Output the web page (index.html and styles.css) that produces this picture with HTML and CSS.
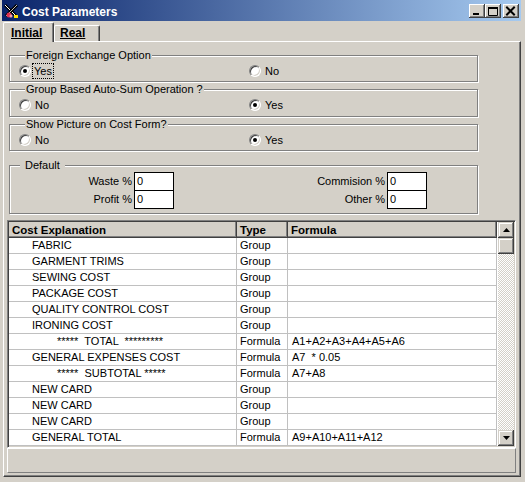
FILE: index.html
```html
<!DOCTYPE html>
<html lang="en">
<head>
    <meta charset="UTF-8">
    <title>Cost Parameters</title>
    <link rel="stylesheet" href="styles.css">
</head>
<body>

<div class="window">
    <!-- Caption bar -->
    <div class="titlebar">
        <svg class="app-icon" width="16" height="16" viewBox="0 0 16 16">
            <path d="M2 2 L13 13" stroke="#000" stroke-width="3"/>
            <path d="M2 2 L13 13" stroke="#fff" stroke-width="1"/>
            <path d="M14 2 L3 13" stroke="#000" stroke-width="3"/>
            <path d="M14 2 L3 13" stroke="#c0c0c0" stroke-width="1"/>
            <circle cx="6" cy="12" r="2.5" fill="#e03050"/>
            <circle cx="8" cy="13" r="1.5" fill="#f0a0b0"/>
            <rect x="11" y="12" width="4" height="3" fill="#ffe000"/>
        </svg>
        <span class="title">Cost Parameters</span>
        <div class="caption-buttons">
            <span class="cap-btn">
                <svg width="12" height="10" viewBox="0 0 12 10"><rect x="2" y="7" width="6" height="2" fill="#000"/></svg>
            </span>
            <span class="cap-btn">
                <svg width="12" height="10" viewBox="0 0 12 10"><path d="M1.5 1.5 H10.5 V9.5 H1.5 Z" fill="none" stroke="#000"/><rect x="1" y="1" width="10" height="2" fill="#000"/></svg>
            </span>
            <span class="cap-btn close">
                <svg width="12" height="10" viewBox="0 0 12 10"><path d="M2 1.5 L9 8.5 M9 1.5 L2 8.5" stroke="#000" stroke-width="2" stroke-linecap="square"/></svg>
            </span>
        </div>
    </div>

    <!-- Tabs -->
    <div class="tabs">
        <div class="tab active">Initial</div>
        <div class="tab">Real</div>
    </div>

    <div class="page">
        <fieldset class="group">
            <legend>Foreign Exchange Option</legend>
            <div class="options">
                <label class="option"><span class="radio checked"></span><span class="focus">Yes</span></label>
                <label class="option"><span class="radio"></span><span>No</span></label>
            </div>
        </fieldset>

        <fieldset class="group tall">
            <legend>Group Based Auto-Sum Operation ?</legend>
            <div class="options">
                <label class="option"><span class="radio"></span><span>No</span></label>
                <label class="option"><span class="radio checked"></span><span>Yes</span></label>
            </div>
        </fieldset>

        <fieldset class="group">
            <legend>Show Picture on Cost Form?</legend>
            <div class="options">
                <label class="option"><span class="radio"></span><span>No</span></label>
                <label class="option"><span class="radio checked"></span><span>Yes</span></label>
            </div>
        </fieldset>

        <fieldset class="group defaults">
            <legend>Default</legend>
            <div class="default-grid">
                <span class="field-label">Waste %</span><span class="field">0</span>
                <span class="field-label">Commision %</span><span class="field">0</span>
                <span class="field-label">Profit %</span><span class="field second">0</span>
                <span class="field-label">Other %</span><span class="field second">0</span>
            </div>
        </fieldset>

        <!-- Cost lines grid -->
        <div class="grid">
            <div class="grid-body">
                <table class="cost-table">
                    <colgroup>
                        <col class="col-expl">
                        <col class="col-type">
                        <col class="col-formula">
                    </colgroup>
                    <thead>
                        <tr><th>Cost Explanation</th><th>Type</th><th>Formula</th></tr>
                    </thead>
                    <tbody>
                        <tr><td class="expl">FABRIC</td><td>Group</td><td></td></tr>
                        <tr><td class="expl">GARMENT TRIMS</td><td>Group</td><td></td></tr>
                        <tr><td class="expl">SEWING COST</td><td>Group</td><td></td></tr>
                        <tr><td class="expl">PACKAGE COST</td><td>Group</td><td></td></tr>
                        <tr><td class="expl">QUALITY CONTROL COST</td><td>Group</td><td></td></tr>
                        <tr><td class="expl">IRONING COST</td><td>Group</td><td></td></tr>
                        <tr><td class="expl total">*****  TOTAL  *********</td><td>Formula</td><td>A1+A2+A3+A4+A5+A6</td></tr>
                        <tr><td class="expl">GENERAL EXPENSES COST</td><td>Formula</td><td class="formula">A7  * 0.05</td></tr>
                        <tr><td class="expl total">*****  SUBTOTAL *****</td><td>Formula</td><td>A7+A8</td></tr>
                        <tr><td class="expl">NEW CARD</td><td>Group</td><td></td></tr>
                        <tr><td class="expl">NEW CARD</td><td>Group</td><td></td></tr>
                        <tr><td class="expl">NEW CARD</td><td>Group</td><td></td></tr>
                        <tr><td class="expl">GENERAL TOTAL</td><td>Formula</td><td>A9+A10+A11+A12</td></tr>
                    </tbody>
                </table>
            </div>
            <div class="vscroll">
                <span class="sb-btn">
                    <svg width="7" height="4" viewBox="0 0 7 4"><path d="M3.5 0 L7 4 H0 Z" fill="#000"/></svg>
                </span>
                <span class="sb-btn thumb"></span>
                <span class="sb-track"></span>
                <span class="sb-btn">
                    <svg width="7" height="4" viewBox="0 0 7 4"><path d="M0 0 H7 L3.5 4 Z" fill="#000"/></svg>
                </span>
            </div>
        </div>

        <div class="statusbar"></div>
    </div>
</div>

</body>
</html>
```

FILE: styles.css
```css
/* Classic Windows dialog look */
body {
    margin: 0;
    padding: 0;
    background-color: #d4d0c8;
    font-family: "Liberation Sans", Arial, sans-serif;
    font-size: 11px;
    color: #000;
}

.window {
    width: 525px;
    height: 482px;
    box-sizing: border-box;
    background-color: #d4d0c8;
    overflow: hidden;
}

/* Title bar */
.titlebar {
    display: flex;
    align-items: center;
    height: 21px;
    width: 519px;
    margin-left: 2px;
    background: linear-gradient(to right, #0a246a, #a6caf0);
}

.app-icon {
    margin-left: 1px;
    margin-right: 3px;
}

.title {
    color: #fff;
    font-weight: bold;
    font-size: 12px;
    padding-top: 2px;
    flex: 1;
}

.caption-buttons {
    display: flex;
    margin-right: 2px;
}

.cap-btn {
    display: flex;
    align-items: center;
    justify-content: center;
    width: 16px;
    height: 14px;
    box-sizing: border-box;
    background-color: #d4d0c8;
    box-shadow: inset -1px -1px #404040, inset 1px 1px #fff, inset -2px -2px #808080;
}

.cap-btn.close {
    margin-left: 2px;
}

/* Tabs */
.tabs {
    display: flex;
    align-items: flex-end;
    height: 19px;
    margin-top: 1px;
    margin-left: 3px;
    position: relative;
    z-index: 1;
}

.tab {
    font-size: 12px;
    font-weight: bold;
    text-decoration: underline;
    height: 16px;
    line-height: 15px;
    padding: 0 13px 0 5px;
    box-sizing: border-box;
    border-left: 1px solid #fff;
    border-top: 1px solid #fff;
    border-right: 1px solid #404040;
    border-radius: 2px 2px 0 0;
    box-shadow: inset -1px 0 #808080;
}

.tab.active {
    height: 20px;
    line-height: 19px;
    width: 51px;
    padding: 1px 0 0 7px;
    margin-bottom: -1px;
    background-color: #d4d0c8;
}

.tab + .tab {
    width: 46px;
    padding-left: 5px;
}

.page {
    width: 518px;
    height: 436px;
    margin-left: 3px;
    box-sizing: border-box;
    border-left: 1px solid #fff;
    border-top: 1px solid #fff;
    border-right: 1px solid #404040;
    border-bottom: 1px solid #404040;
    box-shadow: inset -1px -1px #808080;
    padding: 7px 0 0 5px;
}

/* Group boxes */
.group {
    width: 469px;
    height: 33px;
    box-sizing: border-box;
    margin: 0 0 1px 0;
    padding: 0 0 0 9px;
    border: 1px solid #808080;
    box-shadow: inset 1px 1px #fff, 1px 1px #fff;
}

.group.tall {
    height: 34px;
}

.group legend {
    line-height: 13px;
    padding: 0 1px;
    margin-left: 6px;
    background-color: #d4d0c8;
}

.options {
    display: grid;
    grid-template-columns: 230px 1fr;
    height: 17px;
    align-items: center;
}

.option {
    display: flex;
    align-items: center;
    gap: 4px;
}

.radio {
    position: relative;
    width: 12px;
    height: 12px;
    box-sizing: border-box;
    border-radius: 50%;
    background-color: #fff;
    border: 1px solid;
    border-color: #808080 #fff #fff #808080;
    box-shadow: inset 1px 1px #404040, inset -1px -1px #d4d0c8;
}

.radio.checked::after {
    content: "";
    position: absolute;
    left: 3px;
    top: 3px;
    width: 4px;
    height: 4px;
    border-radius: 50%;
    background-color: #000;
}

.focus {
    outline: 1px dotted #000;
    padding: 1px 1px;
    margin-left: -2px;
}

/* Default values */
.group.defaults {
    height: 55px;
    margin-top: 8px;
    margin-bottom: 0;
    padding: 0;
}

.group.defaults legend {
    margin-left: 10px;
    padding: 0 5px;
}

.default-grid {
    display: grid;
    grid-template-columns: 124px 40px 213px 40px;
    grid-auto-rows: 18px;
}

.field-label {
    text-align: right;
    padding-right: 2px;
    line-height: 18px;
}

.field {
    height: 19px;
    box-sizing: border-box;
    border: 1px solid #000;
    background-color: #fff;
    padding-left: 2px;
    line-height: 17px;
}

/* Grid of cost lines */
.grid {
    display: flex;
    width: 509px;
    height: 228px;
    margin: 6px 0 0 -2px;
    box-sizing: border-box;
    border: 1px solid;
    border-color: #808080 #fff #fff #808080;
    box-shadow: inset 1px 1px #404040, inset -1px -1px #d4d0c8;
    padding: 1px;
}

.grid-body {
    width: 489px;
    background-color: #fff;
}

.cost-table {
    width: 488px;
    table-layout: fixed;
    border-collapse: separate;
    border-spacing: 0;
}

.col-expl { width: 228px; }
.col-type { width: 51px; }
.col-formula { width: 209px; }

.cost-table th {
    height: 16px;
    box-sizing: border-box;
    padding: 0 0 0 3px;
    text-align: left;
    font-size: 11.5px;
    font-weight: bold;
    background-color: #d4d0c8;
    border-right: 1px solid #404040;
    border-bottom: 1px solid #404040;
    box-shadow: inset -1px -1px #808080;
    line-height: 14px;
}

.cost-table td {
    height: 16px;
    box-sizing: border-box;
    padding: 0 0 0 3px;
    border-right: 1px solid #c0c0c0;
    border-bottom: 1px solid #c0c0c0;
    line-height: 15px;
    white-space: pre;
    overflow: hidden;
}

.cost-table td.expl {
    padding-left: 23px;
}

.cost-table td.total {
    padding-left: 48px;
}

.cost-table td:nth-child(3) {
    padding-left: 4px;
}

/* Vertical scrollbar */
.vscroll {
    display: flex;
    flex-direction: column;
    width: 16px;
}

.sb-btn {
    display: flex;
    align-items: center;
    justify-content: center;
    width: 16px;
    height: 16px;
    box-sizing: border-box;
    background-color: #d4d0c8;
    box-shadow: inset -1px -1px #404040, inset 1px 1px #d4d0c8, inset -2px -2px #808080, inset 2px 2px #fff;
}

.sb-track {
    flex: 1;
    background-color: #fff;
    background-image: conic-gradient(#d4d0c8 25%, #fff 0 50%, #d4d0c8 0 75%, #fff 0);
    background-size: 2px 2px;
}

/* Status panel under the grid */
.statusbar {
    width: 509px;
    height: 25px;
    margin-left: -2px;
    box-sizing: border-box;
    border-top: 1px solid #fff;
    border-left: 1px solid #fff;
    border-right: 1px solid #808080;
    border-bottom: 1px solid #808080;
}
```
